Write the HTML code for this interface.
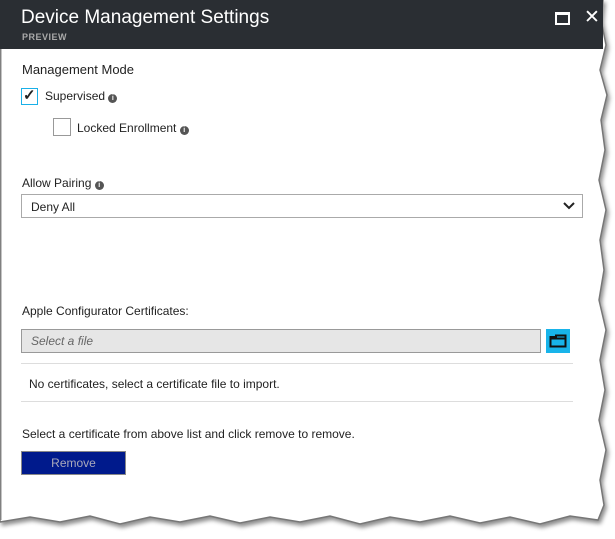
<html><head><style>
body{margin:0;width:615px;height:539px;background:#fff;position:relative;overflow:hidden;font-family:"Liberation Sans",sans-serif;color:#222}
.a{position:absolute}
</style></head><body>
<svg class="a" style="left:0;top:0" width="615" height="539">
<polygon points="0,0 603,0 601,20 606,45 600,70 607,95 601,120 605,150 599,180 606,210 600,240 604,270 599,300 606,330 600,360 605,390 599,420 606,450 600,480 604,505 598,520 570,516 540,524 510,517 480,523 450,516 420,522 390,517 360,524 330,516 300,522 270,517 240,523 210,516 180,522 150,517 120,524 90,516 60,522 30,517 0,522" fill="#fff" stroke="#777" stroke-width="1.5" style="filter:drop-shadow(2px 3px 2px rgba(0,0,0,.45))"/>
<rect x="0" y="0" width="603" height="49" fill="#2a2e33"/>
<line x1="1" y1="49" x2="1" y2="520" stroke="#888" stroke-width="1"/>
</svg>
<div class="a" style="left:21px;top:7px;font-size:19px;color:#fff">Device Management Settings</div>
<div class="a" style="left:22px;top:32px;font-size:9px;color:#aaa;font-weight:bold;letter-spacing:.5px">PREVIEW</div>
<div class="a" style="left:555px;top:12px;width:11px;height:8px;border:2px solid #fff;border-top-width:3px"></div>
<div class="a" style="left:584px;top:6px;color:#fff;font-size:19px">✕</div>
<div class="a" style="left:22px;top:62px;font-size:13px">Management Mode</div>
<div class="a" style="left:21px;top:88px;width:15px;height:15px;border:1px solid #1ab0e8"></div>
<div class="a" style="left:23px;top:86px;font-size:15px;font-weight:bold">✓</div>
<div class="a" style="left:45px;top:89px;font-size:12px">Supervised <span style="display:inline-block;width:9px;height:9px;border-radius:50%;background:#555;color:#fff;font-size:7px;text-align:center;line-height:9px;font-weight:bold">i</span></div>
<div class="a" style="left:53px;top:118px;width:16px;height:16px;border:1px solid #999"></div>
<div class="a" style="left:77px;top:121px;font-size:12px">Locked Enrollment <span style="display:inline-block;width:9px;height:9px;border-radius:50%;background:#555;color:#fff;font-size:7px;text-align:center;line-height:9px;font-weight:bold">i</span></div>
<div class="a" style="left:22px;top:176px;font-size:12px">Allow Pairing <span style="display:inline-block;width:9px;height:9px;border-radius:50%;background:#555;color:#fff;font-size:7px;text-align:center;line-height:9px;font-weight:bold">i</span></div>
<div class="a" style="left:21px;top:194px;width:560px;height:22px;border:1px solid #aaa"></div>
<div class="a" style="left:31px;top:200px;font-size:12px">Deny All</div>
<svg class="a" style="left:563px;top:201px" width="12" height="9"><path d="M1 2 L6 7 L11 2" stroke="#222" stroke-width="2" fill="none"/></svg>
<div class="a" style="left:22px;top:304px;font-size:12px">Apple Configurator Certificates:</div>
<div class="a" style="left:21px;top:329px;width:518px;height:22px;border:1px solid #999;background:#e6e6e6"></div>
<div class="a" style="left:31px;top:334px;font-size:12px;font-style:italic;color:#666">Select a file</div>
<div class="a" style="left:546px;top:329px;width:24px;height:24px;background:#18b4ea"></div>
<svg class="a" style="left:549px;top:334px" width="18" height="14"><path d="M1.5 3 H7 V1.5 H16.5 V12.5 H1.5 Z M1.5 4.5 H16.5" stroke="#111" stroke-width="2" fill="none"/></svg>
<div class="a" style="left:21px;top:363px;width:552px;height:1px;background:#ddd"></div>
<div class="a" style="left:29px;top:377px;font-size:12px">No certificates, select a certificate file to import.</div>
<div class="a" style="left:21px;top:401px;width:552px;height:1px;background:#ddd"></div>
<div class="a" style="left:22px;top:427px;font-size:12px">Select a certificate from above list and click remove to remove.</div>
<div class="a" style="left:21px;top:451px;width:103px;height:22px;background:#001a8c;border:1px solid #888;color:#aab;font-size:12px;text-align:center;line-height:22px">Remove</div>
</body></html>
